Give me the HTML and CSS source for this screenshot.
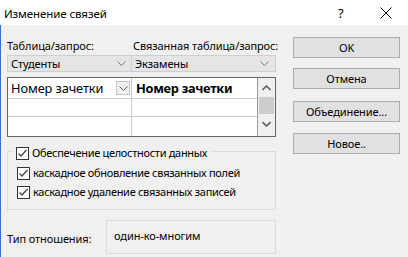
FILE: index.html
```html
<!DOCTYPE html>
<html lang="ru">
<head>
<meta charset="utf-8">
<link rel="stylesheet" href="styles.css">
</head>
<body>
<div class="window">
  <div class="titlebar">
    <span class="title">Изменение связей</span>
    <span class="help">?</span>
    <span class="close">
      <svg width="12" height="12" viewBox="0 0 12 12"><path d="M0.5 0.5 L11.5 11.5 M11.5 0.5 L0.5 11.5" stroke="#000" stroke-width="1" fill="none"/></svg>
    </span>
  </div>
  <div class="client">
    <div class="main">
      <div class="labels">
        <span class="lbl lbl-left">Таблица/запрос:</span>
        <span class="lbl">Связанная таблица/запрос:</span>
      </div>
      <div class="combos">
        <div class="combo combo-left"><span>Студенты</span><svg class="chev" width="9" height="5" viewBox="0 0 9 5"><path d="M0.5 0.5 L4.5 4.5 L8.5 0.5" stroke="#777" fill="none"/></svg></div>
        <div class="combo combo-right"><span>Экзамены</span><svg class="chev" width="9" height="5" viewBox="0 0 9 5"><path d="M0.5 0.5 L4.5 4.5 L8.5 0.5" stroke="#777" fill="none"/></svg></div>
      </div>
      <div class="grid">
        <div class="cols">
          <div class="row row1">
            <div class="cell c1"><span>Номер зачетки</span><span class="dd"><svg width="9" height="5" viewBox="0 0 9 5"><path d="M0.5 0.5 L4.5 4.5 L8.5 0.5" stroke="#555" fill="none"/></svg></span></div>
            <div class="cell c2 bold">Номер зачетки</div>
          </div>
          <div class="row row2">
            <div class="cell c1"></div>
            <div class="cell c2"></div>
          </div>
          <div class="row row3">
            <div class="cell c1"></div>
            <div class="cell c2"></div>
          </div>
        </div>
        <div class="scrollbar">
          <div class="arrow"><svg width="9" height="6" viewBox="0 0 9 6"><path d="M0.5 5 L4.5 1 L8.5 5" stroke="#606060" stroke-width="1.6" fill="none"/></svg></div>
          <div class="thumb"></div>
          <div class="arrow"><svg width="9" height="6" viewBox="0 0 9 6"><path d="M0.5 1 L4.5 5 L8.5 1" stroke="#606060" stroke-width="1.6" fill="none"/></svg></div>
        </div>
      </div>
      <fieldset class="group">
        <legend class="chk legend"><span class="box"><svg width="11" height="11" viewBox="0 0 11 11"><path d="M1.5 5.5 L4 8 L9.5 2" stroke="#444" stroke-width="1.3" fill="none"/></svg></span>Обеспечение целостности данных</legend>
        <div class="chk row-a"><span class="box"><svg width="11" height="11" viewBox="0 0 11 11"><path d="M1.5 5.5 L4 8 L9.5 2" stroke="#444" stroke-width="1.3" fill="none"/></svg></span>каскадное обновление связанных полей</div>
        <div class="chk row-b"><span class="box"><svg width="11" height="11" viewBox="0 0 11 11"><path d="M1.5 5.5 L4 8 L9.5 2" stroke="#444" stroke-width="1.3" fill="none"/></svg></span>каскадное удаление связанных записей</div>
      </fieldset>
      <div class="typerow">
        <span class="typelbl">Тип отношения:</span>
        <div class="typebox">один-ко-многим</div>
      </div>
    </div>
    <div class="buttons">
      <div class="btn b-ok">OK</div>
      <div class="btn b-cancel">Отмена</div>
      <div class="btn b-join">Объединение...</div>
      <div class="btn b-new">Новое..</div>
    </div>
  </div>
</div>
</body>
</html>
```
FILE: styles.css
```css
html, body {
  margin: 0;
  padding: 0;
}
body {
  font-family: "Noto Sans", "Liberation Sans", sans-serif;
  font-size: 11px;
  letter-spacing: -0.1px;
  color: #000;
  background: #f0f0f0;
}
.window {
  width: 408px;
  height: 257px;
  display: flex;
  flex-direction: column;
  overflow: hidden;
}
.titlebar {
  height: 25px;
  background: #fff;
  display: flex;
  align-items: center;
  flex: none;
}
.title {
  margin-left: 4px;
  font-size: 11.5px;
  flex: 1;
  margin-top: 1px;
}
.help {
  width: 14px;
  font-size: 13px;
  margin-right: 28px;
  margin-top: 1px;
}
.close {
  display: flex;
  margin-right: 16px;
}
.client {
  flex: 1;
  background: #f0f0f0;
  border-left: 1px solid #2b74d1;
  display: flex;
  padding-left: 6px;
}
.main {
  width: 269px;
  display: flex;
  flex-direction: column;
}
.labels {
  display: flex;
  margin-top: 12px;
  height: 17px;
  line-height: 17px;
  white-space: nowrap;
}
.lbl-left {
  width: 126px;
  flex: none;
}
.combos {
  display: flex;
  margin-top: 1px;
  height: 17px;
}
.combo {
  box-sizing: border-box;
  height: 17px;
  background: #e5e5e5;
  border: 1px solid #cfcfcf;
  display: flex;
  align-items: center;
  justify-content: space-between;
  padding: 0 6px 0 3px;
  line-height: 15px;
}
.combo-left {
  width: 125px;
}
.combo-right {
  flex: 1;
  border-left: none;
}
.combo-left .chev {
  margin-right: -1px;
}
.grid {
  margin-top: 5px;
  box-sizing: border-box;
  height: 60px;
  border: 1px solid #646464;
  display: flex;
  background: #fff;
}
.cols {
  flex: 1;
  display: flex;
  flex-direction: column;
}
.row {
  display: flex;
  box-sizing: border-box;
  border-bottom: 1px solid #cacaca;
}
.row1 { height: 21px; }
.row2 { height: 18px; }
.row3 { height: 19px; border-bottom: none; }
.cell {
  box-sizing: border-box;
  font-size: 12.8px;
  letter-spacing: -0.1px;
  line-height: 20px;
  display: flex;
  align-items: center;
  white-space: nowrap;
}
.c1 {
  width: 124px;
  border-right: 1px solid #cacaca;
  padding-left: 3px;
  justify-content: space-between;
}
.c2 {
  flex: 1;
  padding-left: 4px;
}
.bold {
  font-weight: bold;
  letter-spacing: -0.3px;
}
.dd {
  width: 14px;
  height: 14px;
  box-sizing: border-box;
  border: 1px solid #c4c4c4;
  background: #f0f0f0;
  display: flex;
  align-items: center;
  justify-content: center;
  margin-right: 1px;
}
.scrollbar {
  width: 17px;
  background: #f0f0f0;
  border-left: 1px solid #9a9a9a;
  display: flex;
  flex-direction: column;
}
.arrow {
  height: 19px;
  display: flex;
  align-items: center;
  justify-content: center;
}
.thumb {
  height: 17px;
  background: #cdcdcd;
  margin: 0 1px;
}
.group {
  margin: 4px 0 0 0;
  padding: 0 0 9px 6px;
  border: 1px solid #dcdcdc;
  min-width: 0;
}
.legend {
  padding: 4px 3px 0 2px;
}
.chk {
  display: flex;
  align-items: center;
  height: 16px;
  line-height: 16px;
  letter-spacing: -0.3px;
  white-space: nowrap;
}
.row-a {
  margin: 4px 0 0 3px;
}
.row-b {
  margin: 3px 0 0 3px;
}
.box {
  box-sizing: border-box;
  width: 13px;
  height: 13px;
  border: 1px solid #333;
  background: #fff;
  display: flex;
  align-items: center;
  justify-content: center;
  margin-right: 3px;
  flex: none;
}
.typerow {
  display: flex;
  align-items: center;
  margin-top: 10px;
}
.typelbl {
  width: 99px;
  margin-top: 2px;
}
.typebox {
  box-sizing: border-box;
  flex: 1;
  height: 34px;
  border: 1px solid #dcdcdc;
  padding-left: 7px;
  line-height: 30px;
}
.buttons {
  margin-left: 17px;
  width: 107px;
  display: flex;
  flex-direction: column;
}
.btn {
  box-sizing: border-box;
  height: 21px;
  background: #e1e1e1;
  border: 1px solid #adadad;
  text-align: center;
  line-height: 19px;
}
.b-ok { margin-top: 12px; }
.b-cancel { margin-top: 10px; }
.b-join { margin-top: 12px; }
.b-new { margin-top: 11px; }
```
